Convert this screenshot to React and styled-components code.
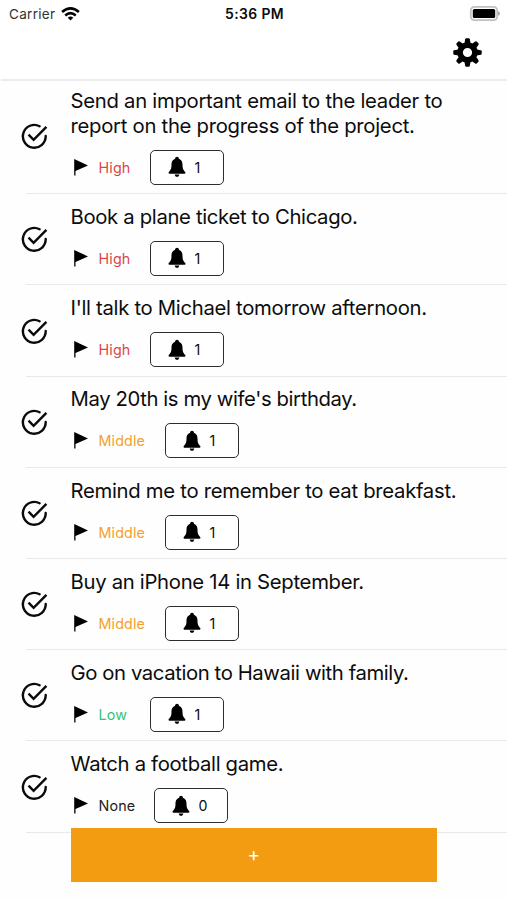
import React from "react";
import styled, { createGlobalStyle } from "styled-components";

const GlobalStyle = createGlobalStyle`
  * { box-sizing: border-box; }
  body { margin: 0; background: #fff; }
`;

const Screen = styled.div`
  position: relative;
  width: 507px;
  height: 900px;
  overflow: hidden;
  background: #fefefe;
  color: #0c0c0c;
  font-family: Inter, "Liberation Sans", sans-serif;
`;

const Header = styled.header`
  height: 78.6px;
  background: #fff;
  box-shadow: 0 1px 1px 0.5px #ececec;
`;

const StatusBar = styled.div`
  display: grid;
  grid-template-columns: 1fr auto 1fr;
  align-items: center;
  height: 27px;
  padding: 0 7px 0 9px;
`;

const Carrier = styled.div`
  display: flex;
  align-items: center;
  gap: 6px;
  font-size: 13.5px;
  letter-spacing: 0.3px;
  color: #333;
`;

const Clock = styled.div`
  font-size: 13.9px;
  font-weight: 600;
  letter-spacing: 0.4px;
`;

const BatterySlot = styled.div`
  display: flex;
  justify-content: flex-end;
`;

const Toolbar = styled.div`
  display: flex;
  justify-content: flex-end;
  padding: 11px 25px 0 0;
`;

const IconButton = styled.button`
  display: flex;
  padding: 0;
  border: 0;
  background: none;
  color: #000;
`;

const TaskList = styled.ul`
  margin: 0;
  padding: 0;
  list-style: none;
`;

const Task = styled.li`
  display: grid;
  grid-template-columns: 49.5px 1fr;
  align-items: center;
  padding: 10.7px 0 9.5px 21px;
  background: linear-gradient(#e9e9e9, #e9e9e9) 26px 100% / 100% 1px no-repeat;
`;

const Title = styled.div`
  font-size: 20.3px;
  line-height: 24.5px;
  letter-spacing: ${(p) => p.$tracking}px;
  white-space: pre-line;
`;

const Meta = styled.div`
  display: flex;
  align-items: center;
  height: 35px;
  margin-top: 11.5px;
`;

const Priority = styled.span`
  width: ${(p) => p.$width}px;
  margin-left: 10px;
  font-size: 14.3px;
  letter-spacing: 0.15px;
  color: ${(p) => p.$color};
`;

const Reminder = styled.button`
  display: flex;
  align-items: center;
  gap: 8.3px;
  width: 74px;
  height: 35px;
  padding: 0 0 0 16.8px;
  border: 1.4px solid #2d2d2d;
  border-radius: 5px;
  background: #fff;
  color: #0c0c0c;
  font: 14.2px Inter, "Liberation Sans", sans-serif;
`;

const AddButton = styled.button`
  position: absolute;
  left: 70.5px;
  bottom: 18.5px;
  width: 366.5px;
  height: 53.5px;
  padding: 0;
  border: 0;
  background: #f39c12;
  color: #fff;
  display: flex;
  align-items: center;
  justify-content: center;
  font: 19px Inter, "Liberation Sans", sans-serif;
`;

const WifiIcon = () => (
  <svg width="19" height="14" viewBox="0 0 19 14" fill="none" stroke="#000" strokeWidth="2.5">
    <path d="M1.1 5Q9.5-2.3 17.9 5" />
    <path d="M4.2 8.5Q9.5 3.8 14.8 8.5" />
    <path d="M6.7 10.7Q9.5 8.5 12.3 10.7L9.5 13.6Z" fill="#000" stroke="none" />
  </svg>
);

const BatteryIcon = () => (
  <svg width="31" height="15" viewBox="0 0 31 15">
    <rect x="1.8" y=".9" width="26.4" height="13.2" rx="3.6" fill="#fff" stroke="#c0c0c0" strokeWidth="1.8" />
    <rect x="3.8" y="2.9" width="22.4" height="9.2" rx="1.5" fill="#000" />
    <path d="M29 5.2q2 .6 2 2.3t-2 2.3z" fill="#aaa" />
  </svg>
);

const GearIcon = () => (
  <svg width="29" height="29" viewBox="-14.5 -14.5 29 29">
    <circle r="7.4" fill="none" stroke="currentColor" strokeWidth="5.6" />
    {[0, 45, 90, 135, 180, 225, 270, 315].map((angle) => (
      <path
        key={angle}
        d="M-3.1-9L-2.3-13.3Q-2.1-14.2-1.2-14.2H1.2Q2.1-14.2 2.3-13.3L3.1-9Z"
        fill="currentColor"
        transform={`rotate(${angle})`}
      />
    ))}
  </svg>
);

const CheckMark = styled.svg`
  width: 27px;
  height: 27px;
  margin-bottom: 1.2px;
`;

const CheckIcon = () => (
  <CheckMark viewBox="0 0 27 27" fill="none" stroke="#0a0a0a" strokeWidth="2.4">
    <path d="M18.6 3.2A11.4 11.4 0 1 0 24.7 13" strokeLinecap="round" />
    <path d="M7.5 11.6L12.6 16.8L25.4 3.9" />
  </CheckMark>
);

const FlagIcon = () => (
  <svg width="18" height="19" viewBox="0 0 18 19" fill="#000">
    <path d="M3.2 1L17 7.4L4.5 12.9V17.6H3.2Z" />
  </svg>
);

const BellIcon = () => (
  <svg width="18" height="22" viewBox="0 0 18 22" fill="#000">
    <circle cx="9" cy="2.7" r="1.9" />
    <path d="M9 2.6C5.6 2.6 3.5 5 3.5 8.5C3.5 13 2.5 14.2.6 16.3Q.2 17.6 1.4 17.7H16.6Q17.8 17.6 17.4 16.3C15.5 14.2 14.5 13 14.5 8.5C14.5 5 12.4 2.6 9 2.6Z" />
    <path d="M6.6 18.6H11.4Q11 21 9 21T6.6 18.6Z" />
  </svg>
);

const priorities = {
  High: { color: "#dc4546", width: 51.9 },
  Middle: { color: "#f3a12c", width: 66.8 },
  Low: { color: "#35c477", width: 51.9 },
  None: { color: "#222", width: 55.8 },
};

const tasks = [
  { title: "Send an important email to the leader to\nreport on the progress of the project.", priority: "High", count: 1, tracking: -0.28 },
  { title: "Book a plane ticket to Chicago.", priority: "High", count: 1, tracking: -0.33 },
  { title: "I'll talk to Michael tomorrow afternoon.", priority: "High", count: 1, tracking: -0.3 },
  { title: "May 20th is my wife's birthday.", priority: "Middle", count: 1, tracking: -0.39 },
  { title: "Remind me to remember to eat breakfast.", priority: "Middle", count: 1, tracking: -0.29 },
  { title: "Buy an iPhone 14 in September.", priority: "Middle", count: 1, tracking: -0.3 },
  { title: "Go on vacation to Hawaii with family.", priority: "Low", count: 1, tracking: -0.4 },
  { title: "Watch a football game.", priority: "None", count: 0, tracking: -0.32 },
];

export default function App() {
  return (
    <Screen>
      <GlobalStyle />
      <Header>
        <StatusBar>
          <Carrier>Carrier <WifiIcon /></Carrier>
          <Clock>5:36 PM</Clock>
          <BatterySlot><BatteryIcon /></BatterySlot>
        </StatusBar>
        <Toolbar>
          <IconButton aria-label="Settings"><GearIcon /></IconButton>
        </Toolbar>
      </Header>
      <TaskList>
        {tasks.map((task) => (
          <Task key={task.title}>
            <CheckIcon />
            <div>
              <Title $tracking={task.tracking}>{task.title}</Title>
              <Meta>
                <FlagIcon />
                <Priority $color={priorities[task.priority].color} $width={priorities[task.priority].width}>
                  {task.priority}
                </Priority>
                <Reminder><BellIcon />{task.count}</Reminder>
              </Meta>
            </div>
          </Task>
        ))}
      </TaskList>
      <AddButton>+</AddButton>
    </Screen>
  );
}
